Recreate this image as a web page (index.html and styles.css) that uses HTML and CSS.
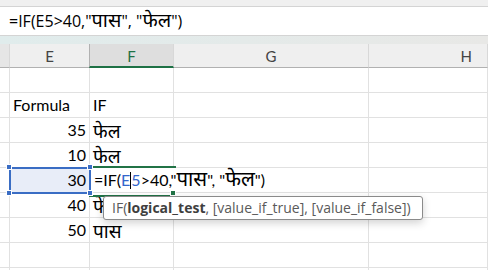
FILE: index.html
```html
<!DOCTYPE html>
<html lang="en">
  <head>
    <meta charset="UTF-8" />
    <meta name="viewport" content="width=device-width, initial-scale=1.0" />
    <title>IF formula</title>
    <link rel="stylesheet" href="styles.css">
  </head>
  <body>
    <div class="top-strip"></div>
    <div class="formula-bar">=IF(E5&gt;40,"<span class="dv">पास</span>", "<span class="dv">फेल</span>")</div>
    <div class="ribbon-gap"></div>

    <div class="sheet">
      <!-- column headers -->
      <div class="col-head corner"></div>
      <div class="col-head">E</div>
      <div class="col-head active">F</div>
      <div class="col-head">G</div>
      <div class="col-head last">H</div>

      <!-- row 1 -->
      <div class="cell edge"></div>
      <div class="cell"></div>
      <div class="cell"></div>
      <div class="cell"></div>
      <div class="cell"></div>

      <!-- row 2 -->
      <div class="cell edge"></div>
      <div class="cell">Formula</div>
      <div class="cell">IF</div>
      <div class="cell"></div>
      <div class="cell"></div>

      <!-- row 3 -->
      <div class="cell edge"></div>
      <div class="cell num">35</div>
      <div class="cell hi">फेल</div>
      <div class="cell"></div>
      <div class="cell"></div>

      <!-- row 4 -->
      <div class="cell edge"></div>
      <div class="cell num">10</div>
      <div class="cell hi">फेल</div>
      <div class="cell"></div>
      <div class="cell"></div>

      <!-- row 5: editing -->
      <div class="cell edge"></div>
      <div class="cell num selected">
        30
        <span class="handle tl"></span><span class="handle tr"></span>
        <span class="handle bl"></span><span class="handle br"></span>
      </div>
      <div class="cell editing">=IF(<span class="ref">E<span class="caret"></span>5</span>&gt;40,"<span class="dv">पास</span>", "<span class="dv">फेल</span>")<span class="edit-knob"></span></div>
      <div class="cell"></div>

      <!-- row 6 -->
      <div class="cell edge"></div>
      <div class="cell num">40</div>
      <div class="cell hi">फेल</div>
      <div class="cell"></div>
      <div class="cell"></div>

      <!-- row 7 -->
      <div class="cell edge"></div>
      <div class="cell num">50</div>
      <div class="cell hi">पास</div>
      <div class="cell"></div>
      <div class="cell"></div>

      <!-- row 8 -->
      <div class="cell edge"></div>
      <div class="cell"></div>
      <div class="cell"></div>
      <div class="cell"></div>
      <div class="cell"></div>

      <!-- row 9 -->
      <div class="cell edge"></div>
      <div class="cell"></div>
      <div class="cell"></div>
      <div class="cell"></div>
      <div class="cell"></div>

      <div class="tooltip">IF(<b>logical_test</b>, [value_if_true], [value_if_false])</div>
    </div>
  </body>
</html>
```

FILE: styles.css
```css
* {
  box-sizing: border-box;
}

body {
  margin: 0;
  width: 488px;
  height: 270px;
  overflow: hidden;
  background: #fff;
  font-family: Lato, "Noto Sans", sans-serif;
  color: #000;
}

.top-strip {
  height: 6px;
  background: #f0f0f0;
}

.formula-bar {
  height: 30px;
  padding: 2px 0 0 9px;
  border-top: 1px solid #d4d4d4;
  border-bottom: 1px solid #d4d4d4;
  font-family: "Open Sans", sans-serif;
  font-size: 16px;
  line-height: 24px;
  white-space: nowrap;
}

.dv {
  font-family: Lato, "Noto Sans", sans-serif;
  font-size: 1.24em;
  line-height: 1;
}

.editing .dv {
  font-size: 1.28em;
}

.ribbon-gap {
  height: 8px;
  background: linear-gradient(to right, #e0ecec, #e8e8e6);
}

.sheet {
  position: relative;
  display: grid;
  grid-template-columns: 10px 80px 84px 195px 119px;
  grid-template-rows: 24px;
  grid-auto-rows: 25px;
  height: 226px;
  overflow: hidden;
}

.col-head {
  display: flex;
  align-items: center;
  justify-content: center;
  background: #efefef;
  border-bottom: 1px solid #b1b1b1;
  border-right: 1px solid #d8d8d8;
  color: #444;
  font-size: 15px;
  padding-top: 1px;
}

.col-head.corner {
  background: #e6e6e6;
}

.col-head.last {
  justify-content: flex-end;
  padding-right: 15px;
}

.col-head.active {
  background: #dedede;
  color: #1e7145;
  border-left: 1px solid #b1b1b1;
  border-bottom: 2px solid #1e7145;
  margin-left: -1px;
}

.cell {
  position: relative;
  border-right: 1px solid #e1e1e1;
  border-bottom: 1px solid #e1e1e1;
  padding: 0 3px;
  font-size: 16px;
  line-height: 24px;
  white-space: nowrap;
}

.num {
  text-align: right;
}

.hi {
  font-size: 19px;
  line-height: 26px;
}

.selected {
  background: #e8edf8;
  outline: 2px solid #3a6dc4;
  outline-offset: -1px;
  z-index: 2;
}

.handle {
  position: absolute;
  width: 6px;
  height: 6px;
  background: #3a6dc4;
  border: 1px solid #fff;
}

.handle.tl { left: -4px; top: -4px; }
.handle.tr { right: -4px; top: -4px; }
.handle.bl { left: -4px; bottom: -4px; }
.handle.br { right: -4px; bottom: -4px; }

.editing {
  grid-column: span 2;
  background: #fff;
  padding-left: 4px;
  z-index: 1;
}

.editing::before {
  content: "";
  position: absolute;
  left: -1px;
  top: -2px;
  width: 85px;
  height: 27px;
  border: 2px solid #217346;
  border-right: none;
  pointer-events: none;
}

.edit-knob {
  position: absolute;
  left: 80px;
  top: 22px;
  width: 6px;
  height: 6px;
  background: #217346;
  border: 1px solid #fff;
}

.ref {
  color: #3366cc;
}

.caret {
  display: inline-block;
  width: 1px;
  height: 17px;
  background: #000;
  vertical-align: -3px;
}

.tooltip {
  position: absolute;
  left: 103px;
  top: 152px;
  width: 320px;
  height: 24px;
  padding-left: 8px;
  background: #fff;
  border: 1px solid #8a8a8a;
  border-radius: 3px;
  box-shadow: 0 3px 8px rgba(0, 0, 0, 0.18);
  color: #5a5a5a;
  font-family: "Open Sans", sans-serif;
  font-size: 14px;
  line-height: 21px;
  white-space: nowrap;
  z-index: 3;
}

.tooltip b {
  color: #3f3f3f;
}
```
